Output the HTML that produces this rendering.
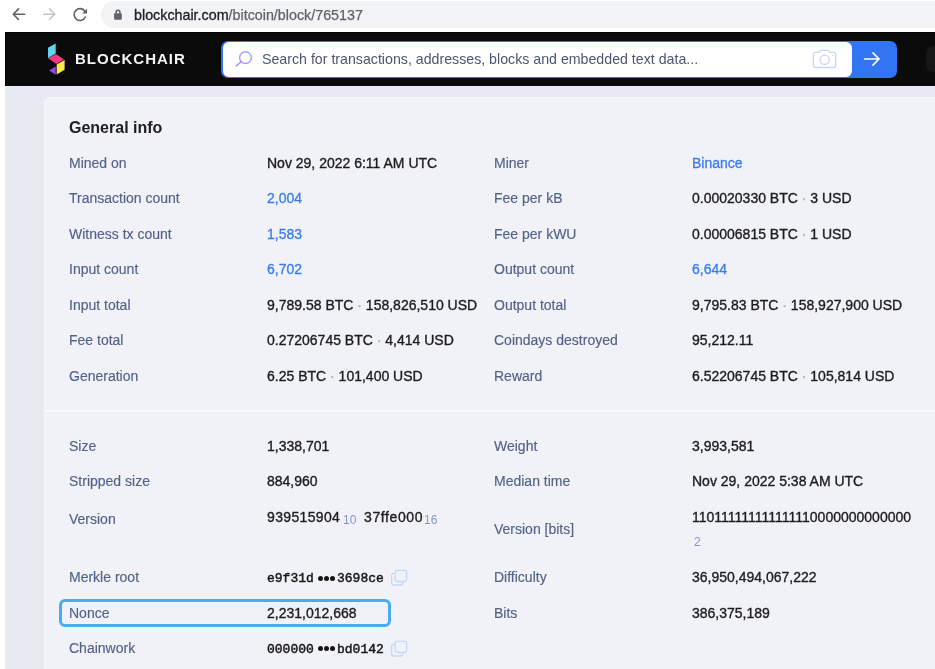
<!DOCTYPE html>
<html><head><meta charset="utf-8">
<style>
*{margin:0;padding:0;box-sizing:border-box}
html,body{width:935px;height:669px;overflow:hidden;background:#fff;font-family:"Liberation Sans",sans-serif;-webkit-font-smoothing:antialiased}
.t,h1,#urltext,#brand,#ph{will-change:transform}
.a{position:absolute}
#chrome{left:0;top:0;width:935px;height:32px;background:#fff}
#url{left:100.8px;top:1px;width:900px;height:26.6px;border-radius:13.3px;background:#f1f3f4}
#urltext{left:133.5px;top:5.6px;font-size:14.3px;line-height:18px;color:#5f6368;white-space:nowrap;-webkit-text-stroke:.25px #5f6368}
#urltext b{font-weight:normal;color:#202124;-webkit-text-stroke:.3px #202124}
#page{left:5px;top:32px;width:930px;height:637px;background:#e8eaf1}
#hdr{left:5px;top:32px;width:930px;height:53.8px;background:#0b0b0b;border-top:1px solid #000;border-left:1px solid #000}
#hline{left:5px;top:85.8px;width:930px;height:1.4px;background:#eff1f5}
#brand{left:75px;top:50px;font-size:15px;line-height:18px;font-weight:bold;color:#f4f4f4;letter-spacing:1px}
#search{left:220.5px;top:40.5px;width:676px;height:37.6px;border-radius:7px;background:#3174f4}
#sinput{left:222.5px;top:42px;width:629px;height:34.5px;border-radius:6px;background:#fff}
#ph{left:262px;top:50px;font-size:14.2px;line-height:18px;color:#4d5672;white-space:nowrap}
#rbtn{left:926px;top:45.7px;width:30px;height:26px;border-radius:8px;background:#171717}
#card{left:44px;top:96.5px;width:940px;height:620px;border-radius:6px;background:#f0f2f7;border:1px solid #f6f7fa}
#sep{left:45px;top:410px;width:900px;height:2px;background:#f8f9fb}
.t{position:absolute;font-size:14px;line-height:20px;white-space:nowrap}
.l{color:#536187;-webkit-text-stroke:.15px #536187}
.v{color:#1c1c1e;-webkit-text-stroke:.35px #1c1c1e}
.b{color:#3a7bf0;-webkit-text-stroke:.3px #3a7bf0}
.dot{color:#b0b9cd;-webkit-text-stroke:.6px #b0b9cd}
.sub{font-size:12px;color:#8696c2}
.mono{font-family:"Liberation Mono",monospace;font-size:13px;color:#161616;-webkit-text-stroke:.45px #161616}
.bul{width:5px;height:5px;border-radius:50%;background:#141414}
h1{position:absolute;left:68.5px;top:117.6px;font-size:16px;line-height:20px;font-weight:bold;color:#202022}
</style></head><body>
<div class="a" id="chrome"></div>
<div class="a" id="url"></div>
<div class="a" id="urltext"><b>blockchair.com</b>/bitcoin/block/765137</div>
<div class="a" id="page"></div>
<div class="a" id="hdr"></div>
<div class="a" id="hline"></div>
<div class="a" id="brand">BLOCKCHAIR</div>
<div class="a" id="search"></div>
<div class="a" id="sinput"></div>
<div class="a" id="ph">Search for transactions, addresses, blocks and embedded text data...</div>
<div class="a" id="rbtn"></div>
<div class="a" id="card"></div>
<div class="a" id="sep"></div>
<h1>General info</h1>
<!--ROWS-->
<div class="t l" style="left:68.5px;top:153.15px">Mined on</div>
<div class="t v" style="left:267px;top:153.15px">Nov 29, 2022 6:11 AM UTC</div>
<div class="t l" style="left:494px;top:153.15px">Miner</div>
<div class="t b" style="left:692px;top:153.15px">Binance</div>
<div class="t l" style="left:68.5px;top:188.15px">Transaction count</div>
<div class="t b" style="left:267px;top:188.15px">2,004</div>
<div class="t l" style="left:494px;top:188.15px">Fee per kB</div>
<div class="t v" style="left:692px;top:188.15px">0.00020330 BTC<span class="dot"> · </span>3 USD</div>
<div class="t l" style="left:68.5px;top:224.15px">Witness tx count</div>
<div class="t b" style="left:267px;top:224.15px">1,583</div>
<div class="t l" style="left:494px;top:224.15px">Fee per kWU</div>
<div class="t v" style="left:692px;top:224.15px">0.00006815 BTC<span class="dot"> · </span>1 USD</div>
<div class="t l" style="left:68.5px;top:259.15px">Input count</div>
<div class="t b" style="left:267px;top:259.15px">6,702</div>
<div class="t l" style="left:494px;top:259.15px">Output count</div>
<div class="t b" style="left:692px;top:259.15px">6,644</div>
<div class="t l" style="left:68.5px;top:295.15px">Input total</div>
<div class="t v" style="left:267px;top:295.15px">9,789.58 BTC<span class="dot"> · </span>158,826,510 USD</div>
<div class="t l" style="left:494px;top:295.15px">Output total</div>
<div class="t v" style="left:692px;top:295.15px">9,795.83 BTC<span class="dot"> · </span>158,927,900 USD</div>
<div class="t l" style="left:68.5px;top:330.15px">Fee total</div>
<div class="t v" style="left:267px;top:330.15px">0.27206745 BTC<span class="dot"> · </span>4,414 USD</div>
<div class="t l" style="left:494px;top:330.15px">Coindays destroyed</div>
<div class="t v" style="left:692px;top:330.15px">95,212.11</div>
<div class="t l" style="left:68.5px;top:366.15px">Generation</div>
<div class="t v" style="left:267px;top:366.15px">6.25 BTC<span class="dot"> · </span>101,400 USD</div>
<div class="t l" style="left:494px;top:366.15px">Reward</div>
<div class="t v" style="left:692px;top:366.15px">6.52206745 BTC<span class="dot"> · </span>105,814 USD</div>
<div class="t l" style="left:68.5px;top:435.65px">Size</div>
<div class="t v" style="left:267px;top:435.65px">1,338,701</div>
<div class="t l" style="left:494px;top:435.65px">Weight</div>
<div class="t v" style="left:692px;top:435.65px">3,993,581</div>
<div class="t l" style="left:68.5px;top:471.15px">Stripped size</div>
<div class="t v" style="left:267px;top:471.15px">884,960</div>
<div class="t l" style="left:494px;top:471.15px">Median time</div>
<div class="t v" style="left:692px;top:471.15px">Nov 29, 2022 5:38 AM UTC</div>
<div class="t l" style="left:68.5px;top:567.15px">Merkle root</div>
<div class="t l" style="left:494px;top:567.15px">Difficulty</div>
<div class="t v" style="left:692px;top:567.15px">36,950,494,067,222</div>
<div class="t l" style="left:68.5px;top:603.15px">Nonce</div>
<div class="t v" style="left:267px;top:603.15px">2,231,012,668</div>
<div class="t l" style="left:494px;top:603.15px">Bits</div>
<div class="t v" style="left:692px;top:603.15px">386,375,189</div>
<div class="t l" style="left:68.5px;top:638.15px">Chainwork</div>
<!--/ROWS-->
<!--EXTRA-->
<svg class="a" style="left:0;top:0" width="140" height="32" viewBox="0 0 140 32">
<g fill="none" stroke-width="1.6" stroke-linecap="round" stroke-linejoin="round">
<path d="M24.6 14.2H13.6M18.5 8.9L13.3 14.2L18.5 19.5" stroke="#5f6368"/>
<path d="M43.8 14.2H54.8M49.5 8.9L54.7 14.2L49.5 19.5" stroke="#c1c4c9"/>
<path d="M84.9 11.2A5.9 5.9 0 1 0 85.4 17" stroke="#5f6368"/>
</g>
<path d="M87 8.8V13.6H82.2Z" fill="#5f6368"/>
<rect x="114.1" y="13.3" width="7.7" height="6.4" rx="1" fill="#5f6368"/>
<path d="M116.1 13.6V12.1A1.9 1.9 0 0 1 119.9 12.1V13.6" fill="none" stroke="#5f6368" stroke-width="1.6"/>
</svg>
<svg class="a" style="left:40px;top:38px" width="30" height="42" viewBox="40 38 30 42">
<path d="M48 47.8L55.7 43.4V53.6L48 57.9Z" fill="#5fd6ef"/>
<path d="M48.1 58.3L55.9 54L64.1 59.6L56.4 64Z" fill="#ee3a80"/>
<path d="M56.7 64.5L64.6 60.1V69.8L56.7 74.6Z" fill="#faec4f"/>
<path d="M49 70.5L55.7 66.6V74.8Z" fill="#9a3ff5"/>
</svg>
<svg class="a" style="left:230px;top:46px" width="28" height="26" viewBox="230 46 28 26">
<defs><linearGradient id="sg" x1="1" y1="0" x2="0" y2="1"><stop offset="0" stop-color="#98b6fa"/><stop offset="1" stop-color="#b58ff6"/></linearGradient></defs>
<circle cx="245.5" cy="57.6" r="5.9" fill="none" stroke="url(#sg)" stroke-width="1.5"/>
<path d="M241.3 61.6L236.4 65.9" stroke="#b792f6" stroke-width="1.5" stroke-linecap="round"/>
</svg>
<svg class="a" style="left:808px;top:44px" width="80" height="30" viewBox="808 44 80 30">
<g fill="none" stroke="#c5d5fb" stroke-width="1.3">
<path d="M815.3 52.3H819.3L820.3 50.4H828.6L829.6 52.3H833.7A2 2 0 0 1 835.7 54.3V65.5A2 2 0 0 1 833.7 67.5H815.3A2 2 0 0 1 813.3 65.5V54.3A2 2 0 0 1 815.3 52.3Z"/>
<circle cx="824.6" cy="59.8" r="4.6"/>
</g>
<circle cx="832.8" cy="55.5" r="0.7" fill="#c5d5fb"/>
<path d="M864.6 59H878.6M873 52.8L879 59L873 65.2" fill="none" stroke="#fff" stroke-width="1.7" stroke-linecap="round" stroke-linejoin="round"/>
</svg>
<div class="a" style="left:59px;top:598.5px;width:332px;height:28px;border:3px solid #4aabf5;border-radius:6px"></div>
<div class="t v" style="left:267px;top:507px;letter-spacing:.35px">939515904</div>
<div class="t sub" style="left:343.3px;top:510.3px">10</div>
<div class="t v" style="left:363.5px;top:507px;letter-spacing:.6px">37ffe000</div>
<div class="t sub" style="left:424.3px;top:510.3px">16</div>
<div class="t l" style="left:68.5px;top:508.55px">Version</div>
<div class="t l" style="left:494px;top:519.25px">Version [bits]</div>
<div class="t v" style="left:692px;top:506.65px">110111111111111110000000000000</div>
<div class="t sub" style="left:694.3px;top:531.6px">2</div>
<div class="t mono" style="left:267px;top:568.9px">e9f31d</div>
<div class="t mono" style="left:337.3px;top:568.9px">3698ce</div>
<div class="a bul" style="left:317.8px;top:575.5px"></div><div class="a bul" style="left:323.8px;top:575.5px"></div><div class="a bul" style="left:330px;top:575.5px"></div>
<div class="t mono" style="left:267px;top:639.8px">000000</div>
<div class="t mono" style="left:337.3px;top:639.8px">bd0142</div>
<div class="a bul" style="left:317.8px;top:646.4px"></div><div class="a bul" style="left:323.8px;top:646.4px"></div><div class="a bul" style="left:330px;top:646.4px"></div>
<svg class="a" style="left:388px;top:566px" width="22" height="22" viewBox="388 566 22 22">
<g fill="none" stroke="#c8d7f8" stroke-width="1.3">
<path d="M394.7 573.3H393.9A2.3 2.3 0 0 0 391.6 575.6V582.7A2.3 2.3 0 0 0 393.9 585H400.7A2.3 2.3 0 0 0 403 582.7V582"/>
<rect x="395.1" y="570.3" width="11.5" height="11.2" rx="2.4"/>
</g></svg>
<svg class="a" style="left:388px;top:637px" width="22" height="22" viewBox="388 566 22 22">
<g fill="none" stroke="#c8d7f8" stroke-width="1.3">
<path d="M394.7 573.3H393.9A2.3 2.3 0 0 0 391.6 575.6V582.7A2.3 2.3 0 0 0 393.9 585H400.7A2.3 2.3 0 0 0 403 582.7V582"/>
<rect x="395.1" y="570.3" width="11.5" height="11.2" rx="2.4"/>
</g></svg>
<!--/EXTRA-->
</body></html>
